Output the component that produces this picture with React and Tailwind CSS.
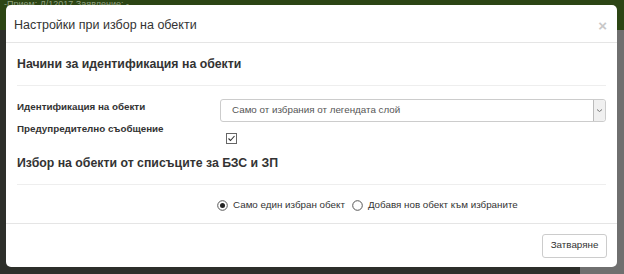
import React from "react";

export default function App() {
  return (
    <div
      className="relative w-[624px] h-[274px] overflow-hidden bg-[#3a3833]"
      style={{ fontFamily: '"Liberation Sans", Arial, sans-serif' }}
    >
      {/* page behind the backdrop */}
      <div className="absolute inset-0 flex flex-col">
        <div className="h-[30px] bg-[#2c4514] text-[9px] text-[#8fa080] pl-[4px] leading-[8px]">
          -Прием: Д/12017 Заявление: -
        </div>
        <div className="flex-1 flex">
          <div className="flex-1 bg-[#2d2f2a]" />
          <div className="w-[44px] bg-[#6f6f6f]" />
        </div>
      </div>

      {/* modal */}
      <div className="absolute left-[6px] top-[5px] w-[611px] h-[262px] bg-white rounded-[5px] flex flex-col text-[#333]">
        <div className="h-[38px] border-b border-[#e5e5e5] flex items-center justify-between pl-[8px] pr-[10px] pt-[4px]">
          <span className="text-[12.5px] text-[#333]">Настройки при избор на обекти</span>
          <span className="text-[15px] font-bold text-[#c8c8c8] leading-none">×</span>
        </div>

        <div className="flex-1 px-[11px]">
          <div className="h-[42px] flex items-center text-[12.3px] font-bold pt-[1px]">
            Начини за идентификация на обекти
          </div>
          <div className="border-t border-[#eeeeee]" />

          <div className="mt-[13px] flex items-start">
            <div className="w-[203px] text-[9.8px] font-bold pt-[1px]">Идентификация на обекти</div>
            <div className="flex-1 h-[23px] border border-[#cccccc] rounded-[3px] flex items-stretch">
              <div className="flex-1 text-[9.8px] text-[#555] pl-[11px] flex items-center">
                Само от избрания от легендата слой
              </div>
              <div className="w-[12px] border-l border-[#bbbbbb] bg-[#f0f0f0] rounded-r-[3px] flex items-center justify-center">
                <svg width="7" height="5" viewBox="0 0 7 5">
                  <path d="M1 1.5 L3.5 3.5 L6 1.5" stroke="#777" strokeWidth="1" fill="none" />
                </svg>
              </div>
            </div>
          </div>

          <div className="-mt-[2px] flex items-start">
            <div className="w-[209px] text-[9.8px] font-bold pt-[2px]">Предупредително съобщение</div>
            <div className="pt-[13px]">
              <svg width="11" height="11" viewBox="0 0 11 11">
                <rect x="0.5" y="0.5" width="10" height="10" fill="white" stroke="#666" />
                <path d="M2.5 5.5 L4.5 7.5 L8.5 3" stroke="#333" strokeWidth="1.1" fill="none" />
              </svg>
            </div>
          </div>

          <div className="mt-[9px] h-[20px] flex items-center text-[12.3px] font-bold">
            Избор на обекти от списъците за БЗС и ЗП
          </div>
          <div className="mt-[11px] border-t border-[#eeeeee]" />

          <div className="mt-[13px] flex items-center pl-[200px] text-[9.8px] text-[#333]">
            <svg width="11" height="11" viewBox="0 0 11 11" className="mr-[5px]">
              <circle cx="5.5" cy="5.5" r="4.8" fill="white" stroke="#555" />
              <circle cx="5.5" cy="5.5" r="2.5" fill="#222" />
            </svg>
            <span>Само един избран обект</span>
            <svg width="11" height="11" viewBox="0 0 11 11" className="ml-[7px] mr-[5px]">
              <circle cx="5.5" cy="5.5" r="4.8" fill="white" stroke="#555" />
            </svg>
            <span>Добавя нов обект към избраните</span>
          </div>
        </div>

        <div className="h-[44px] border-t border-[#e5e5e5] flex items-center justify-end pr-[10px]">
          <div className="h-[24px] w-[65px] border border-[#cccccc] rounded-[3px] text-[9.8px] text-[#333] flex items-center justify-center">
            Затваряне
          </div>
        </div>
      </div>
    </div>
  );
}
